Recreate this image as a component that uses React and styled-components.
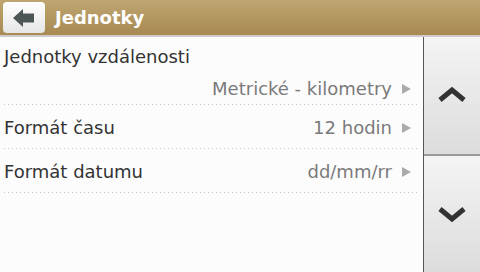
import React from 'react';
import styled, { createGlobalStyle } from 'styled-components';

const GlobalStyle = createGlobalStyle`
    html, body {
        margin: 0;
        padding: 0;
        background: #fdfcfd;
    }
    body {
        font-family: "DejaVu Sans", "Liberation Sans", sans-serif;
    }
`;

const Screen = styled.div`
    width: 480px;
    height: 272px;
    display: flex;
    flex-direction: column;
    overflow: hidden;
    background: #fdfcfd;
`;

const Header = styled.div`
    height: 37px;
    display: flex;
    align-items: center;
    padding-left: 3px;
    gap: 10px;
    background: linear-gradient(#bea571, #a88a52);
    border-bottom: 2px solid #cfcacc;
    box-sizing: border-box;
    flex-shrink: 0;
`;

const BackButton = styled.div`
    width: 42px;
    height: 31px;
    border-radius: 4px;
    background: linear-gradient(#ffffff, #e6e6e6);
    display: flex;
    align-items: center;
    justify-content: center;
`;

const Title = styled.h1`
    margin: 0;
    font-size: 18px;
    font-weight: bold;
    color: #fff;
`;

const Body = styled.div`
    flex: 1;
    display: flex;
`;

const List = styled.div`
    flex: 1;
    padding: 0 4px;
`;

const Row = styled.div`
    display: flex;
    justify-content: space-between;
    align-items: center;
    padding: 11px 0 9px;
    background: repeating-linear-gradient(to right, #c4c4c4 0 1px, transparent 1px 4px) bottom left / 100% 1px no-repeat;
`;

const TallRow = styled(Row)`
    flex-direction: column;
    align-items: stretch;
    padding: 8px 0 4px;
    gap: 8px;
`;

const Label = styled.div`
    font-size: 18px;
    color: #333;
    line-height: 24px;
`;

const Value = styled.div`
    font-size: 18px;
    color: #7a7a7a;
    line-height: 24px;
    display: flex;
    align-items: center;
    justify-content: flex-end;
    gap: 10px;
    padding-right: 8px;
`;

const Arrow = styled.span`
    width: 0;
    height: 0;
    border-top: 5px solid transparent;
    border-bottom: 5px solid transparent;
    border-left: 9px solid #aaa;
`;

const Scroller = styled.div`
    width: 56px;
    display: flex;
    flex-direction: column;
    border-left: 1px solid #555;
`;

const ScrollButton = styled.div`
    flex: 1;
    display: flex;
    align-items: center;
    justify-content: center;
    background: linear-gradient(#f4f4f4, #dcdcdc);
    border-top: ${p => p.$second ? '2px solid #9a9a9a' : 'none'};
`;

function Chevron({ down }) {
    return (
        <svg width="30" height="18" viewBox="0 0 30 18">
            <path
                d={down ? 'M3 4 L15 14 L27 4' : 'M3 14 L15 4 L27 14'}
                fill="none"
                stroke="#333"
                strokeWidth="5"
            />
        </svg>
    );
}

function App() {
    return (
        <>
            <GlobalStyle />
            <Screen>
                <Header>
                    <BackButton>
                        <svg width="22" height="18" viewBox="0 0 22 18">
                            <path d="M0 9 L10 0 L10 4.5 L21 4.5 L21 13.5 L10 13.5 L10 18 Z" fill="#4d5656" />
                        </svg>
                    </BackButton>
                    <Title>Jednotky</Title>
                </Header>
                <Body>
                    <List>
                        <TallRow>
                            <Label>Jednotky vzdálenosti</Label>
                            <Value>Metrické - kilometry <Arrow /></Value>
                        </TallRow>
                        <Row>
                            <Label>Formát času</Label>
                            <Value>12 hodin <Arrow /></Value>
                        </Row>
                        <Row>
                            <Label>Formát datumu</Label>
                            <Value>dd/mm/rr <Arrow /></Value>
                        </Row>
                    </List>
                    <Scroller>
                        <ScrollButton><Chevron /></ScrollButton>
                        <ScrollButton $second><Chevron down /></ScrollButton>
                    </Scroller>
                </Body>
            </Screen>
        </>
    );
}

export default App;
